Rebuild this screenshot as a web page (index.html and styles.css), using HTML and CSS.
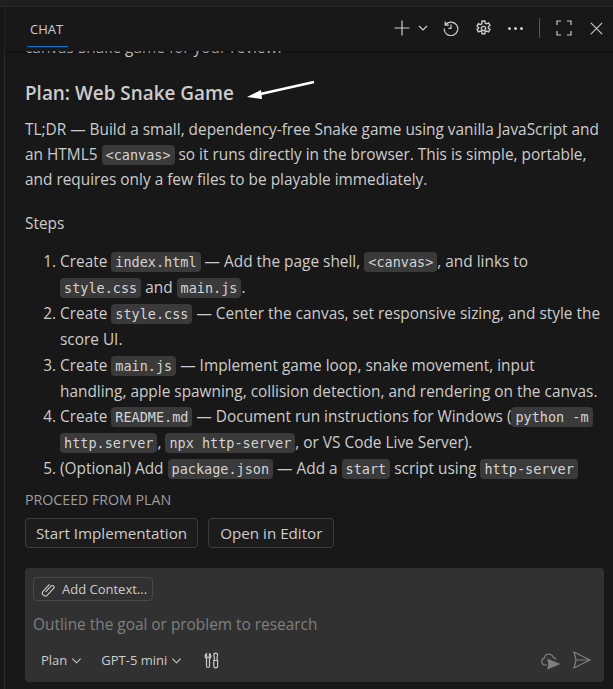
FILE: index.html
```html
<!DOCTYPE html>
<html>
	<head>
		<meta charset="UTF-8">
		<meta name="viewport" content="width=device-width, initial-scale=1.0">
		<title>Chat</title>
		<link rel="stylesheet" href="styles.css">
	</head>
	<body>
		<div class="topstrip"></div>
		<div class="panel">
			<header class="chathead">
				<div class="tab">CHAT</div>
				<div class="actions">
					<svg class="ic plus" viewBox="0 0 16 16"><path d="M8 0.5v15M0.5 8h15"/></svg>
					<svg class="ic chev" viewBox="0 0 12 12"><path d="M2 4l4 4 4-4"/></svg>
					<svg class="ic hist" viewBox="0 0 16 16"><path d="M2.200 1.500v3.700h3.700M2.400 5A6.800 6.800 0 1 1 1.200 8.600M8 4.400v4h-2.600"/></svg>
					<svg class="ic gear" viewBox="0 0 16 16"><circle cx="8" cy="8" r="2"/><path d="M6.700 1h2.600l.4 2 1.200.6 1.900-.8 1.300 2.300-1.500 1.300v1.200l1.500 1.300-1.300 2.300-1.900-.8-1.200.6-.4 2H6.700l-.4-2-1.200-.6-1.900.8-1.300-2.300 1.500-1.300V7.100L1.900 5.800l1.300-2.300 1.900.8 1.200-.6z"/></svg>
					<span class="dots"><i></i><i></i><i></i></span>
					<span class="sep"></span>
					<svg class="ic full" viewBox="0 0 16 16"><path d="M1 5V1h4M11 1h4v4M15 11v4h-4M5 15H1v-4"/></svg>
					<svg class="ic close" viewBox="0 0 16 16"><path d="M2 2l12 12M14 2L2 14"/></svg>
				</div>
			</header>

			<main class="content">
				<p class="cutline">canvas Snake game for your review.</p>
				<div class="titlerow">
					<h2>Plan: Web Snake Game</h2>
					<svg class="arrow" viewBox="0 0 70 22"><path d="M68 2L10 15" stroke="#fff" stroke-width="2.4" fill="none"/><path d="M1 17l14-7 1 9z" fill="#fff"/></svg>
				</div>
				<p class="para">TL;DR — Build a small, dependency-free Snake game using vanilla JavaScript and<br>an HTML5 <code>&lt;canvas&gt;</code> so it runs directly in the browser. This is simple, portable,<br>and requires only a few files to be playable immediately.</p>
				<p class="steps">Steps</p>
				<ol>
					<li>Create <code>index.html</code> — Add the page shell, <code>&lt;canvas&gt;</code>, and links to<br><code>style.css</code> and <code>main.js</code>.</li>
					<li>Create <code>style.css</code> — Center the canvas, set responsive sizing, and style the<br>score UI.</li>
					<li>Create <code>main.js</code> — Implement game loop, snake movement, input<br>handling, apple spawning, collision detection, and rendering on the canvas.</li>
					<li>Create <code>README.md</code> — Document run instructions for Windows (<code>python -m</code><br><code>http.server</code>, <code>npx http-server</code>, or VS Code Live Server).</li>
					<li>(Optional) Add <code>package.json</code> — Add a <code>start</code> script using <code>http-server</code></li>
				</ol>
				<div class="proceed">PROCEED FROM PLAN</div>
				<div class="btns">
					<button>Start Implementation</button>
					<button class="openbtn">Open in Editor</button>
				</div>
			</main>

			<section class="inputbox">
				<div class="ctx">
					<svg class="ic clip" viewBox="0 0 16 16"><path d="M5 10.500l5.600-6.200a1.900 1.900 0 0 1 2.800 2.600l-6.600 7a3 3 0 0 1-4.400-4.100l6.600-7.200"/></svg>
					<span>Add Context...</span>
				</div>
				<div class="placeholder">Outline the goal or problem to research</div>
				<div class="toolbar">
					<span class="pick">Plan <svg class="ic minichev" viewBox="0 0 12 12"><path d="M1.500 4l4.500 4.500L10.500 4"/></svg></span>
					<span class="pick">GPT-5 mini <svg class="ic minichev" viewBox="0 0 12 12"><path d="M1.500 4l4.500 4.500L10.500 4"/></svg></span>
					<svg class="ic tools" viewBox="0 0 16 16"><path d="M2.500 1.200v3l1.500 1 1.500-1v-3a3 3 0 0 1 .8 4.300l-.8.8v7.200a1.500 1.500 0 0 1-3 0V6.300l-.8-.8a3 3 0 0 1 .8-4.300zM9.800 8h3.800v5.500a1.900 1.900 0 0 1-3.800 0zM10.300 8V4.500L9.800 2.600a1.900 1.900 0 0 1 3.800 0L13.100 4.500V8"/></svg>
					<span class="grow"></span>
					<svg class="ic cloud" viewBox="0 0 20 20"><path d="M7 15H5a3.500 3.500 0 0 1-.6-6.900 4.500 4.500 0 0 1 8.800-.8A3.500 3.500 0 0 1 16 9.500"/><path class="solid" d="M8 9.500l11 4.500-11 4.500 1-4.500z"/></svg>
					<svg class="ic send" viewBox="0 0 20 20"><path d="M2 2l16 8-16 8 2-8zM4 10h14"/></svg>
				</div>
			</section>
		</div>
	</body>
</html>
```

FILE: styles.css
```css
html,
body {
	margin: 0;
	padding: 0;
	height: 689px;
	overflow: hidden;
}

body {
	background-color: #181818;
	color: #cccccc;
	font-family: "Open Sans", "Noto Sans", sans-serif;
	font-size: 15.4px;
	display: flex;
	flex-direction: column;
}

.topstrip {
	height: 6px;
	background-color: #1f1f1f;
	border-bottom: 1px solid #2b2b2b;
	flex: none;
}

.panel {
	flex: 1;
	margin-left: 4px;
	border-left: 1px solid #2b2b2b;
	display: flex;
	flex-direction: column;
	min-height: 0;
}

.ic {
	fill: none;
	stroke: #cccccc;
	stroke-width: 1.2;
	flex: none;
}

/* header */
.chathead {
	height: 44px;
	flex: none;
	display: flex;
	align-items: center;
	justify-content: space-between;
	box-shadow: 0 1px 3px rgba(0, 0, 0, 0.5);
	position: relative;
	z-index: 2;
	background-color: #181818;
}

.tab {
	margin-left: 22px;
	padding: 6px 5px 7px 3px;
	font-size: 13px;
	line-height: 20px;
	border-bottom: 1px solid #0078d4;
	margin-top: 2px;
}

.actions {
	display: flex;
	align-items: center;
	margin-right: 9px;
	margin-top: -2px;
}

.plus { width: 16px; height: 16px; margin-right: 7px; }
.chev { width: 12px; height: 12px; margin-right: 14px; }
.hist { width: 16px; height: 16px; margin-right: 16px; }
.gear { width: 17px; height: 17px; margin-right: 16px; stroke-width: 1.3; }

.dots {
	display: flex;
	gap: 3px;
	margin-right: 16px;
}

.dots i {
	width: 3px;
	height: 3px;
	border-radius: 50%;
	background-color: #cccccc;
}

.sep {
	width: 1px;
	height: 20px;
	background-color: #5a5a5a;
	margin-right: 16px;
}

.full { width: 16px; height: 16px; margin-right: 17px; }
.close { width: 15px; height: 15px; }

/* chat text */
.content {
	flex: 1;
	min-height: 0;
	overflow: hidden;
	padding: 0 0 0 20px;
}

.cutline {
	margin: -16px 0 0;
	line-height: 26px;
}

.titlerow {
	display: flex;
	align-items: center;
	margin-top: 17px;
	height: 30px;
}

h2 {
	margin: 0;
	font-size: 18.9px;
	font-weight: 600;
}

.arrow {
	width: 70px;
	height: 22px;
	margin-left: 12px;
	margin-top: -4px;
}

.para {
	margin: 9px 0 0;
	line-height: 25px;
	white-space: nowrap;
}

.steps {
	margin: 19px 0 0;
	line-height: 25px;
}

ol {
	margin: 13px 0 0;
	padding: 0 0 0 35px;
	white-space: nowrap;
}

li {
	line-height: 25.900px;
}

code {
	font-family: "DejaVu Sans Mono", "Liberation Mono", monospace;
	font-size: 13.500px;
	line-height: 1;
	background-color: #3a3a3a;
	color: #d4d4d4;
	border-radius: 4px;
	padding: 2px 4px;
}

.proceed {
	font-size: 14.200px;
	line-height: 18px;
	color: #9d9d9d;
	margin-top: 9px;
}

.btns {
	display: flex;
	gap: 10px;
	margin-top: 9px;
}

button {
	font-family: inherit;
	font-size: 15.200px;
	line-height: 20px;
	height: 30px;
	padding: 0 10px;
	color: #cccccc;
	background-color: #1c1c1c;
	border: 1px solid #3c3c3c;
	border-radius: 4px;
}

.openbtn {
	padding: 0 11px;
}

/* input */
.inputbox {
	flex: none;
	height: 114px;
	box-sizing: border-box;
	margin: 0 9px 7px 20px;
	background-color: #313131;
	border-radius: 4px;
	padding: 9px 8px 0;
	display: flex;
	flex-direction: column;
}

.ctx {
	align-self: flex-start;
	display: flex;
	align-items: center;
	gap: 6px;
	height: 24px;
	box-sizing: border-box;
	padding: 0 5px 0 7px;
	border: 1px solid #484848;
	border-radius: 4px;
	font-size: 13px;
}

.clip { width: 15px; height: 15px; }

.placeholder {
	margin-top: 12px;
	line-height: 24px;
	color: #7f7f7f;
	font-size: 15.400px;
}

.toolbar {
	display: flex;
	align-items: center;
	margin-top: 13px;
	padding-left: 8px;
	padding-right: 4px;
	font-size: 13px;
}

.pick {
	display: flex;
	align-items: center;
	gap: 4px;
	margin-right: 19px;
}

.minichev { width: 11px; height: 11px; }

.tools { width: 16px; height: 17px; margin-left: 3px; }

.grow { flex: 1; }

.cloud,
.send {
	stroke: #7f7f7f;
	width: 20px;
	height: 20px;
}

.cloud { margin-right: 12px; }

.solid {
	fill: #7f7f7f;
}
```
